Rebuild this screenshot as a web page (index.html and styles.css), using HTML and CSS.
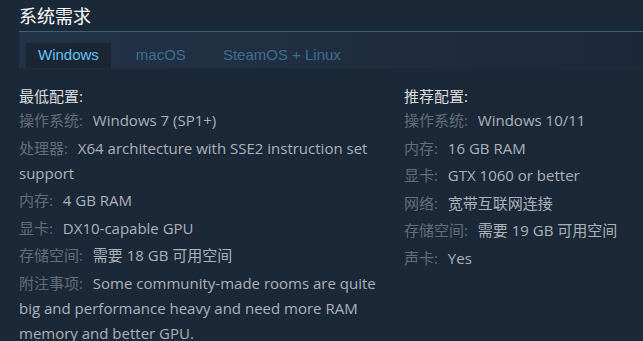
FILE: index.html
```html
<!DOCTYPE html>
<html lang="zh-CN">
<head>
<meta charset="UTF-8">
<title>系统需求</title>
<link rel="stylesheet" href="styles.css">
</head>
<body>
<div class="sysreq">
  <h2 class="title">系统需求</h2>
  <div class="tabs">
    <div class="tab active">Windows</div>
    <div class="tab">macOS</div>
    <div class="tab">SteamOS + Linux</div>
  </div>
  <div class="cols">
    <div class="col left">
      <div class="head">最低配置:</div>
      <ul class="reqs">
        <li><span class="label">操作系统:</span> Windows 7 (SP1+)</li>
        <li><span class="label">处理器:</span> X64 architecture with SSE2 instruction set support</li>
        <li><span class="label">内存:</span> 4 GB RAM</li>
        <li><span class="label">显卡:</span> DX10-capable GPU</li>
        <li><span class="label">存储空间:</span> 需要 18 GB 可用空间</li>
        <li><span class="label">附注事项:</span> Some community-made rooms are quite big and performance heavy and need more RAM memory and better GPU.</li>
      </ul>
    </div>
    <div class="col right">
      <div class="head">推荐配置:</div>
      <ul class="reqs">
        <li><span class="label">操作系统:</span> Windows 10/11</li>
        <li><span class="label">内存:</span> 16 GB RAM</li>
        <li><span class="label">显卡:</span> GTX 1060 or better</li>
        <li><span class="label">网络:</span> 宽带互联网连接</li>
        <li><span class="label">存储空间:</span> 需要 19 GB 可用空间</li>
        <li><span class="label">声卡:</span> Yes</li>
      </ul>
    </div>
  </div>
</div>
</body>
</html>
```

FILE: styles.css
```css
body {
  margin: 0;
  background-color: #1b2838;
  font-family: "Open Sans", "Noto Sans CJK SC", sans-serif;
  overflow: hidden;
}

.sysreq {
  padding: 0 0 0 19px;
}

.title {
  margin: 0;
  padding-top: 3px;
  height: 28px;
  font-size: 18px;
  font-weight: normal;
  color: #ffffff;
  font-family: "Noto Sans CJK SC", sans-serif;
  line-height: 24px;
}

.tabs {
  display: flex;
  align-items: flex-end;
  height: 36px;
  border-top: 1px solid #3e6179;
  background: linear-gradient(to right, #223247 0%, #1f2d3f 60%, #1b2838 100%);
  padding-left: 7px;
  box-shadow: 0 1px 0 #1e2b3a;
}

.tab {
  font-family: "Liberation Sans", Arial, sans-serif;
  font-size: 15px;
  color: #3f6e8f;
  padding: 0 12px;
  height: 25px;
  line-height: 24px;
  margin-right: 13px;
}

.tab.active {
  background-color: #1a2634;
  color: #67c1f5;
}

.cols {
  display: flex;
  padding-top: 17px;
}

.col.left {
  width: 366px;
}

.col.right {
  padding-left: 19px;
  flex: 1;
}

.head {
  font-size: 15px;
  color: #dcdedf;
  line-height: 22px;
  margin-bottom: 1px;
}

.reqs {
  list-style: none;
  margin: 0;
  padding: 0;
}

.reqs li {
  font-size: 15px;
  color: #acb2b8;
  line-height: 25px;
  margin-bottom: 2.5px;
}

.label {
  color: #646d78;
  margin-right: 6px;
}
```
